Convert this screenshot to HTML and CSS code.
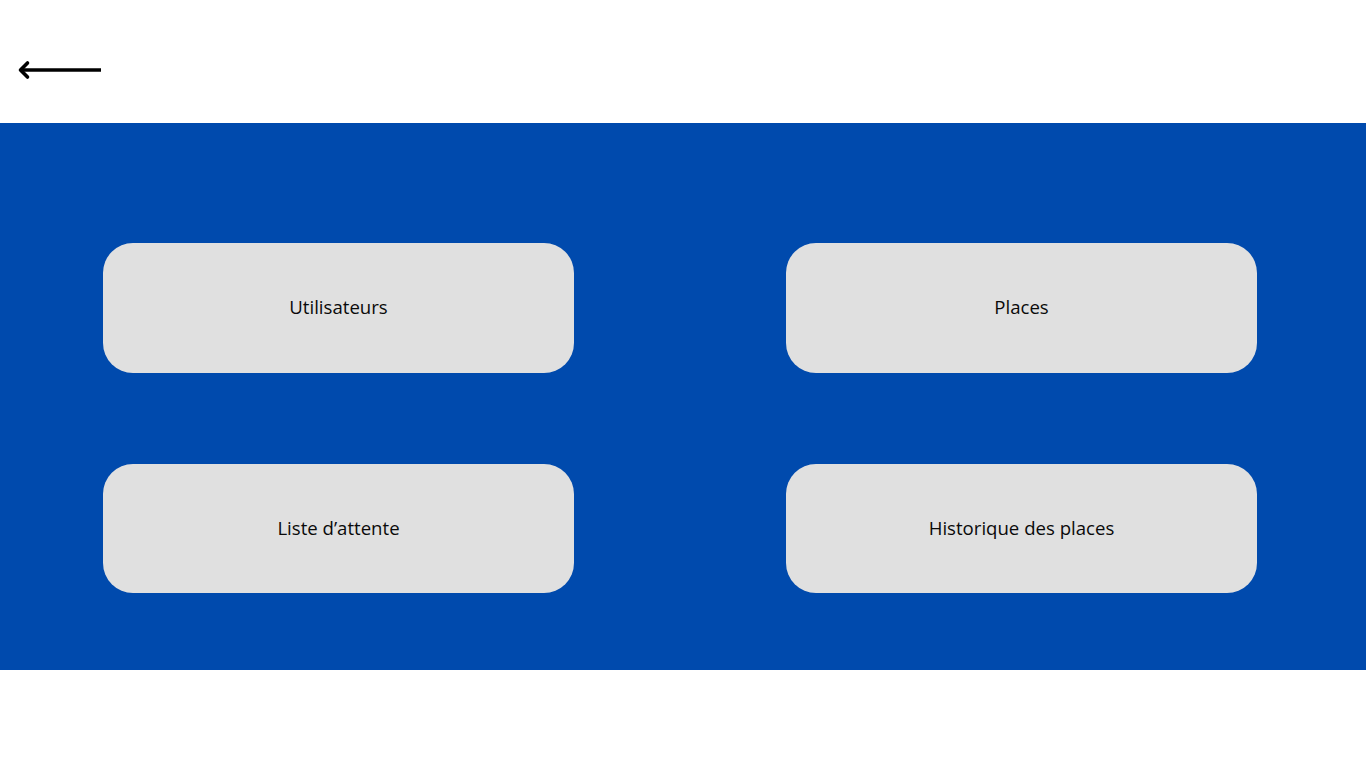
FILE: index.html
```html
<!DOCTYPE html>
<html lang="fr">
<head>
<meta charset="utf-8">
<title>Menu</title>
<link rel="stylesheet" href="styles.css">
</head>
<body>
<header class="top">
  <a class="back" href="#" aria-label="Retour">
    <svg width="86" height="20" viewBox="0 0 86 20">
      <path d="M84 10H5" stroke="#000" stroke-width="3.6" fill="none"/>
      <path d="M10.5 3L3.5 10L10.5 17" stroke="#000" stroke-width="3.6" fill="none" stroke-linecap="round" stroke-linejoin="round"/>
    </svg>
  </a>
</header>
<main class="band">
  <div class="grid">
    <a class="tile" href="#">Utilisateurs</a>
    <a class="tile" href="#">Places</a>
    <a class="tile" href="#">Liste d’attente</a>
    <a class="tile" href="#">Historique des places</a>
  </div>
</main>
</body>
</html>
```
FILE: styles.css
```css
html, body {
  margin: 0;
  padding: 0;
  background: #ffffff;
  font-family: "Open Sans", "Noto Sans", sans-serif;
}
.top {
  height: 123px;
  display: flex;
  align-items: flex-start;
}
.back {
  display: block;
  margin-top: 60px;
  margin-left: 17px;
  line-height: 0;
}
.band {
  background: #004aad;
  height: 547px;
  box-sizing: border-box;
  padding: 120px 109px 0 103px;
}
.grid {
  display: grid;
  grid-template-columns: 471px 471px;
  grid-auto-rows: 129.5px;
  column-gap: 212px;
  row-gap: 91px;
}
.tile {
  background: #e0e0e0;
  border-radius: 30px;
  display: flex;
  align-items: center;
  justify-content: center;
  padding-bottom: 2px;
  box-sizing: border-box;
  color: #0a0a0a;
  text-decoration: none;
  font-size: 18.6px;
}
```
